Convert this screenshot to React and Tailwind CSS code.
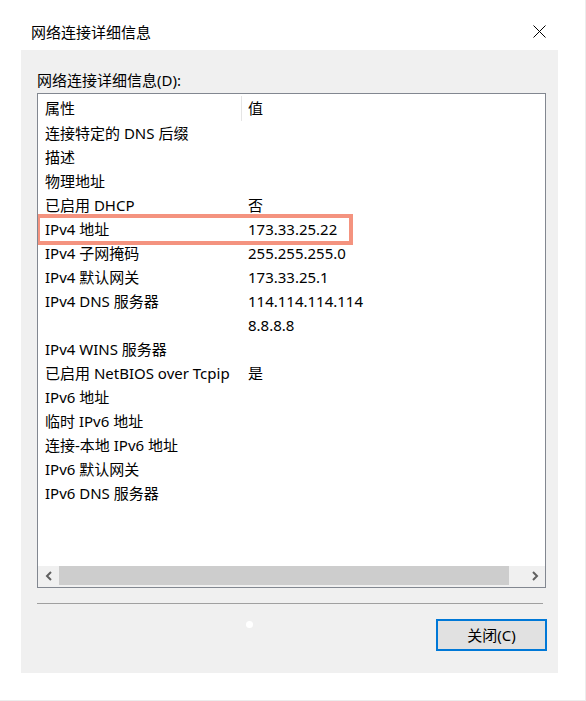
import React from "react"

const rows = [
  ["连接特定的 DNS 后缀", ""],
  ["描述", ""],
  ["物理地址", ""],
  ["已启用 DHCP", "否"],
  ["IPv4 地址", "173.33.25.22"],
  ["IPv4 子网掩码", "255.255.255.0"],
  ["IPv4 默认网关", "173.33.25.1"],
  ["IPv4 DNS 服务器", "114.114.114.114"],
  ["", "8.8.8.8"],
  ["IPv4 WINS 服务器", ""],
  ["已启用 NetBIOS over Tcpip", "是"],
  ["IPv6 地址", ""],
  ["临时 IPv6 地址", ""],
  ["连接-本地 IPv6 地址", ""],
  ["IPv6 默认网关", ""],
  ["IPv6 DNS 服务器", ""],
]

const font = { fontFamily: '"Noto Sans", "Noto Sans CJK SC", sans-serif' }

function Row({ name, value, highlight }) {
  return (
    <div className="relative flex h-[24px] items-center">
      <div className="w-[203px] shrink-0 pl-[7px] whitespace-nowrap">{name}</div>
      <div className="pl-[7px] whitespace-nowrap">{value}</div>
      {highlight && (
        <div className="absolute left-[-2px] top-[-3px] h-[31px] w-[317px] border-[4px] border-[#f4937f]" />
      )}
    </div>
  )
}

export default function App() {
  return (
    <div
      className="relative h-[701px] w-[586px] border-r border-b border-[#ececec] bg-white text-[15px] text-black"
      style={font}
    >
      {/* title bar */}
      <div className="flex h-[50px] items-start justify-between">
        <div className="mt-[21px] ml-[31px] leading-[22px]">网络连接详细信息</div>
        <svg className="mt-[25px] mr-[39px]" width="13" height="13" viewBox="0 0 13 13">
          <path d="M0.5 0.5 L12.5 12.5 M12.5 0.5 L0.5 12.5" stroke="#000" strokeWidth="1" fill="none" />
        </svg>
      </div>

      {/* body */}
      <div className="relative ml-[21px] h-[623px] w-[537px] bg-[#f0f0f0] px-[16px]">
        <div className="pt-[20px] leading-[20px]">网络连接详细信息(D):</div>

        <div className="mt-[3px] flex h-[495px] w-[509px] flex-col border border-[#828790] bg-white">
          <div className="flex-1 overflow-hidden">
            <div className="flex h-[27px] items-center pt-[2px]">
              <div className="w-[203px] shrink-0 pl-[7px]">属性</div>
              <div className="h-[25px] w-px bg-[#e5e5e5]" />
              <div className="pl-[6px]">值</div>
            </div>
            {rows.map(([n, v], i) => (
              <Row key={i} name={n} value={v} highlight={n === "IPv4 地址"} />
            ))}
          </div>

          {/* horizontal scrollbar */}
          <div className="flex h-[21px] items-start bg-[#f0f0f0]">
            <div className="flex h-[19px] w-[21px] items-center justify-center">
              <svg width="8" height="10" viewBox="0 0 8 10">
                <path d="M6 1 L2 5 L6 9" stroke="#606060" strokeWidth="2" fill="none" />
              </svg>
            </div>
            <div className="h-[19px] w-[450px] bg-[#cdcdcd]" />
            <div className="flex-1" />
            <div className="flex h-[19px] w-[21px] items-center justify-center">
              <svg width="8" height="10" viewBox="0 0 8 10">
                <path d="M2 1 L6 5 L2 9" stroke="#606060" strokeWidth="2" fill="none" />
              </svg>
            </div>
          </div>
        </div>

        <div className="mt-[15px] h-px w-[506px] bg-[#a0a0a0]" />

        <div className="mt-[15px] flex justify-end">
          <button className="mr-[-5px] h-[32px] w-[111px] border-2 border-[#0078d7] bg-[#e1e1e1] text-[15px] leading-none">
            关闭(C)
          </button>
        </div>

        <div className="absolute left-[225px] top-[571px] h-[7px] w-[7px] rounded-full bg-white" />
      </div>
    </div>
  )
}
